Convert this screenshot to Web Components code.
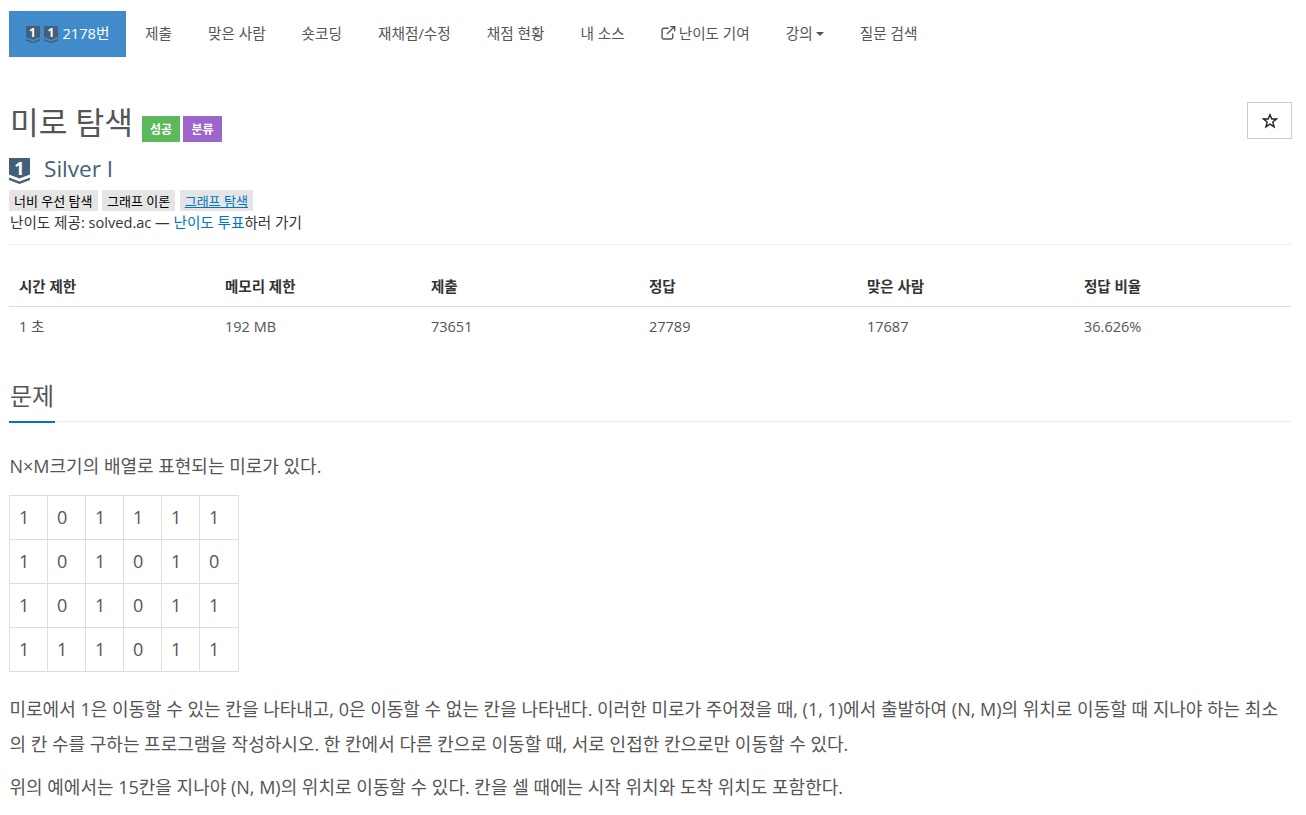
<!DOCTYPE html>
<html lang="ko">
<head>
<meta charset="utf-8">
<title>미로 탐색</title>
<style>
    html, body { margin: 0; background: #fff; }
    body {
        font-family: "Open Sans", "Noto Sans CJK KR", sans-serif;
        font-size: 14px;
        color: #333;
        overflow: hidden;
        height: 815px;
    }
</style>
</head>
<body>
<problem-page></problem-page>
<script>
class TierIcon extends HTMLElement {
    connectedCallback() {
        const size = Number(this.getAttribute('size')) || 16;
        this.attachShadow({ mode: 'open' }).innerHTML = `
            <style>
                :host { display: inline-block; position: relative; line-height: 0; }
                svg { display: block; }
                /* the digit lies over the shield */
                span {
                    position: absolute;
                    top: 0;
                    left: 0;
                    width: 100%;
                    text-align: center;
                    font: 700 ${size * 18 / 21}px/${size * 20 / 21}px "Open Sans", sans-serif;
                    color: #fff;
                }
            </style>
            <svg width="${size}" height="${size * 26 / 21}" viewBox="0 0 21 26">
                <path d="M0 0H21V16.500L10.500 20.500L0 16.500Z" fill="#435f7a"/>
                <path d="M0 19.500L10.500 23.500L21 19.500V22L10.500 26L0 22Z" fill="#435f7a"/>
            </svg>
            <span>1</span>
        `;
    }
}

class NavItem extends HTMLElement {
    connectedCallback() {
        this.attachShadow({ mode: 'open' }).innerHTML = `
            <style>
                :host {
                    display: flex;
                    align-items: center;
                    gap: 3px;
                    box-sizing: border-box;
                    height: 46px;
                    padding: 0 18px 3px;
                    font-size: 14.650px;
                    color: #555;
                    white-space: nowrap;
                }
                :host([active]) {
                    background: #428bca;
                    color: #fff;
                    gap: 4.500px;
                    padding: 0 16.500px 3px;
                    margin-right: 1px;
                }
            </style>
            <slot></slot>
        `;
    }
}

class NavBar extends HTMLElement {
    connectedCallback() {
        this.attachShadow({ mode: 'open' }).innerHTML = `
            <style>
                :host { display: flex; padding: 11px 9px 0; height: 46px; }
                .caret { display: inline-block; border: 4px solid transparent; border-top-color: #555; border-bottom: 0; margin: 2px 0 0 0; }
                svg { display: block; }
                tier-icon { margin-top: 5px; }
            </style>
            <nav-item active><tier-icon size="14"></tier-icon><tier-icon size="14"></tier-icon>2178번</nav-item>
            <nav-item>제출</nav-item>
            <nav-item>맞은 사람</nav-item>
            <nav-item>숏코딩</nav-item>
            <nav-item>재채점/수정</nav-item>
            <nav-item>채점 현황</nav-item>
            <nav-item>내 소스</nav-item>
            <nav-item>
                <svg width="15" height="15" viewBox="0 0 14 14" fill="none" stroke="#555" stroke-width="1.300">
                    <path d="M11 8V11.500A1.500 1.500 0 0 1 9.500 13H2.500A1.500 1.500 0 0 1 1 11.500V4.500A1.500 1.500 0 0 1 2.500 3H7"/>
                    <path d="M5.500 8.500L12 2M8.500 1.500H12.800V5.800"/>
                </svg>난이도 기여
            </nav-item>
            <nav-item>강의<span class="caret"></span></nav-item>
            <nav-item>질문 검색</nav-item>
        `;
    }
}

class StatusLabel extends HTMLElement {
    connectedCallback() {
        this.attachShadow({ mode: 'open' }).innerHTML = `
            <style>
                :host {
                    display: inline-flex;
                    align-items: center;
                    justify-content: center;
                    height: 26px;
                    min-width: 22px;
                    padding: 0 8px;
                    font-size: 12px;
                    font-weight: 700;
                    color: #fff;
                    background: var(--label-bg, #5cb85c);
                }
            </style>
            <slot></slot>
        `;
    }
}

class AlgoTag extends HTMLElement {
    connectedCallback() {
        this.attachShadow({ mode: 'open' }).innerHTML = `
            <style>
                :host {
                    display: inline-flex;
                    align-items: center;
                    height: 21px;
                    padding: 0 5px;
                    font-size: 13px;
                    color: #000;
                    background: #e5e5e5;
                }
                :host([link]) { color: #0076c0; text-decoration: underline; }
            </style>
            <slot></slot>
        `;
    }
}

class ProblemHeader extends HTMLElement {
    connectedCallback() {
        this.attachShadow({ mode: 'open' }).innerHTML = `
            <style>
                :host { display: block; padding: 0 15px 0 9px; }
                .title-row { display: flex; align-items: flex-end; height: 40px; margin-top: 45px; }
                h1 { margin: 0 9px 0 1px; font-size: 31.200px; font-weight: 400; line-height: 40px; color: #555; white-space: nowrap; }
                .labels { display: flex; gap: 3px; }
                .labels status-label:last-child { padding: 0 8.500px; }
                .star {
                    margin: 0 -1px 3px auto;
                    width: 45px;
                    height: 37px;
                    box-sizing: border-box;
                    border: 1px solid #ccc;
                    display: flex;
                    align-items: center;
                    justify-content: center;
                }
                .tier { display: flex; align-items: center; gap: 14px; height: 26px; margin-top: 16px; font-size: 22.600px; color: #435f7a; }
                .tier span { margin-bottom: 6px; }
                .tags { display: flex; gap: 4.500px; margin-top: 6px; }
                .credit { font-size: 14.600px; color: #333; line-height: 22px; padding-left: 1px; padding-bottom: 11px; border-bottom: 1px solid #eee; }
                a { color: #0076c0; }
            </style>
            <div class="title-row">
                <h1>미로 탐색</h1>
                <div class="labels">
                    <status-label>성공</status-label>
                    <status-label style="--label-bg:#9e66cc">분류</status-label>
                </div>
                <div class="star">
                    <svg width="16" height="16" viewBox="0 0 16 16" fill="none" stroke="#222" stroke-width="1.400">
                        <path d="M8 1.800L9.800 6H14.500L10.800 9L12.100 13.800L8 11.100L3.900 13.800L5.200 9L1.500 6H6.200Z"/>
                    </svg>
                </div>
            </div>
            <div class="tier"><tier-icon size="21"></tier-icon><span>Silver I</span></div>
            <div class="tags">
                <algo-tag>너비 우선 탐색</algo-tag>
                <algo-tag>그래프 이론</algo-tag>
                <algo-tag link>그래프 탐색</algo-tag>
            </div>
            <div class="credit">난이도 제공: solved.ac — <a>난이도 투표</a>하러 가기</div>
        `;
    }
}

class InfoTable extends HTMLElement {
    connectedCallback() {
        const heads = ['시간 제한', '메모리 제한', '제출', '정답', '맞은 사람', '정답 비율'];
        const vals = ['1 초', '192 MB', '73651', '27789', '17687', '36.626%'];
        this.attachShadow({ mode: 'open' }).innerHTML = `
            <style>
                :host { display: block; margin: 21px 15px 0 9px; }
                .row { display: grid; grid-template-columns: 206px 206px 218px 218px 217px 1fr; }
                .row > div { padding: 0 10px; }
                .head { height: 40px; font-weight: 700; font-size: 14.500px; color: #333; border-bottom: 1px solid #ddd; }
                .head > div { line-height: 42px; }
                .body { height: 40px; font-size: 14.500px; color: #555; }
                .body > div { line-height: 39px; }
            </style>
            <div class="row head">${heads.map(h => `<div>${h}</div>`).join('')}</div>
            <div class="row body">${vals.map(v => `<div>${v}</div>`).join('')}</div>
        `;
    }
}

class SectionTitle extends HTMLElement {
    connectedCallback() {
        this.attachShadow({ mode: 'open' }).innerHTML = `
            <style>
                :host { display: flex; margin: 34px 15px 0 9px; border-bottom: 1px dotted #ddd; }
                h2 { margin: 0 0 -2px; padding: 0 1px 10px; font-size: 24px; line-height: 30px; font-weight: 400; color: #555; border-bottom: 2px solid #0076c0; }
            </style>
            <h2><slot></slot></h2>
        `;
    }
}

class MazeTable extends HTMLElement {
    connectedCallback() {
        const rows = ['101111', '101010', '101011', '111011'];
        this.attachShadow({ mode: 'open' }).innerHTML = `
            <style>
                :host { display: block; }
                table { border-collapse: collapse; }
                td { border: 1px solid #ddd; width: 28px; height: 43px; padding: 0 0 0 9px; text-align: left; font-size: 18px; color: #555; }
                td:last-child { width: 29px; }
            </style>
            <table>${rows.map(r => `<tr>${[...r].map(c => `<td>${c}</td>`).join('')}</tr>`).join('')}</table>
        `;
    }
}

class ProblemBody extends HTMLElement {
    connectedCallback() {
        this.attachShadow({ mode: 'open' }).innerHTML = `
            <style>
                :host { display: block; margin: 0 15px 0 9px; font-size: 18px; line-height: 35px; color: #555; word-break: break-all; }
                p { margin: 0; padding-left: 0.500px; }
                .first { margin-top: 27px; margin-bottom: 11px; }
                .desc { margin-top: 20px; }
                .last { margin-top: 8px; }
            </style>
            <p class="first">N×M크기의 배열로 표현되는 미로가 있다.</p>
            <maze-table></maze-table>
            <p class="desc">미로에서 1은 이동할 수 있는 칸을 나타내고, 0은 이동할 수 없는 칸을 나타낸다. 이러한 미로가 주어졌을 때, (1, 1)에서 출발하여 (N, M)의 위치로 이동할 때 지나야 하는 최소의 칸 수를 구하는 프로그램을 작성하시오. 한 칸에서 다른 칸으로 이동할 때, 서로 인접한 칸으로만 이동할 수 있다.</p>
            <p class="last">위의 예에서는 15칸을 지나야 (N, M)의 위치로 이동할 수 있다. 칸을 셀 때에는 시작 위치와 도착 위치도 포함한다.</p>
        `;
    }
}

class ProblemPage extends HTMLElement {
    connectedCallback() {
        this.attachShadow({ mode: 'open' }).innerHTML = `
            <style>:host { display: block; }</style>
            <nav-bar></nav-bar>
            <problem-header></problem-header>
            <info-table></info-table>
            <section-title>문제</section-title>
            <problem-body></problem-body>
        `;
    }
}

customElements.define('tier-icon', TierIcon);
customElements.define('nav-item', NavItem);
customElements.define('nav-bar', NavBar);
customElements.define('status-label', StatusLabel);
customElements.define('algo-tag', AlgoTag);
customElements.define('problem-header', ProblemHeader);
customElements.define('info-table', InfoTable);
customElements.define('section-title', SectionTitle);
customElements.define('maze-table', MazeTable);
customElements.define('problem-body', ProblemBody);
customElements.define('problem-page', ProblemPage);
</script>
</body>
</html>
